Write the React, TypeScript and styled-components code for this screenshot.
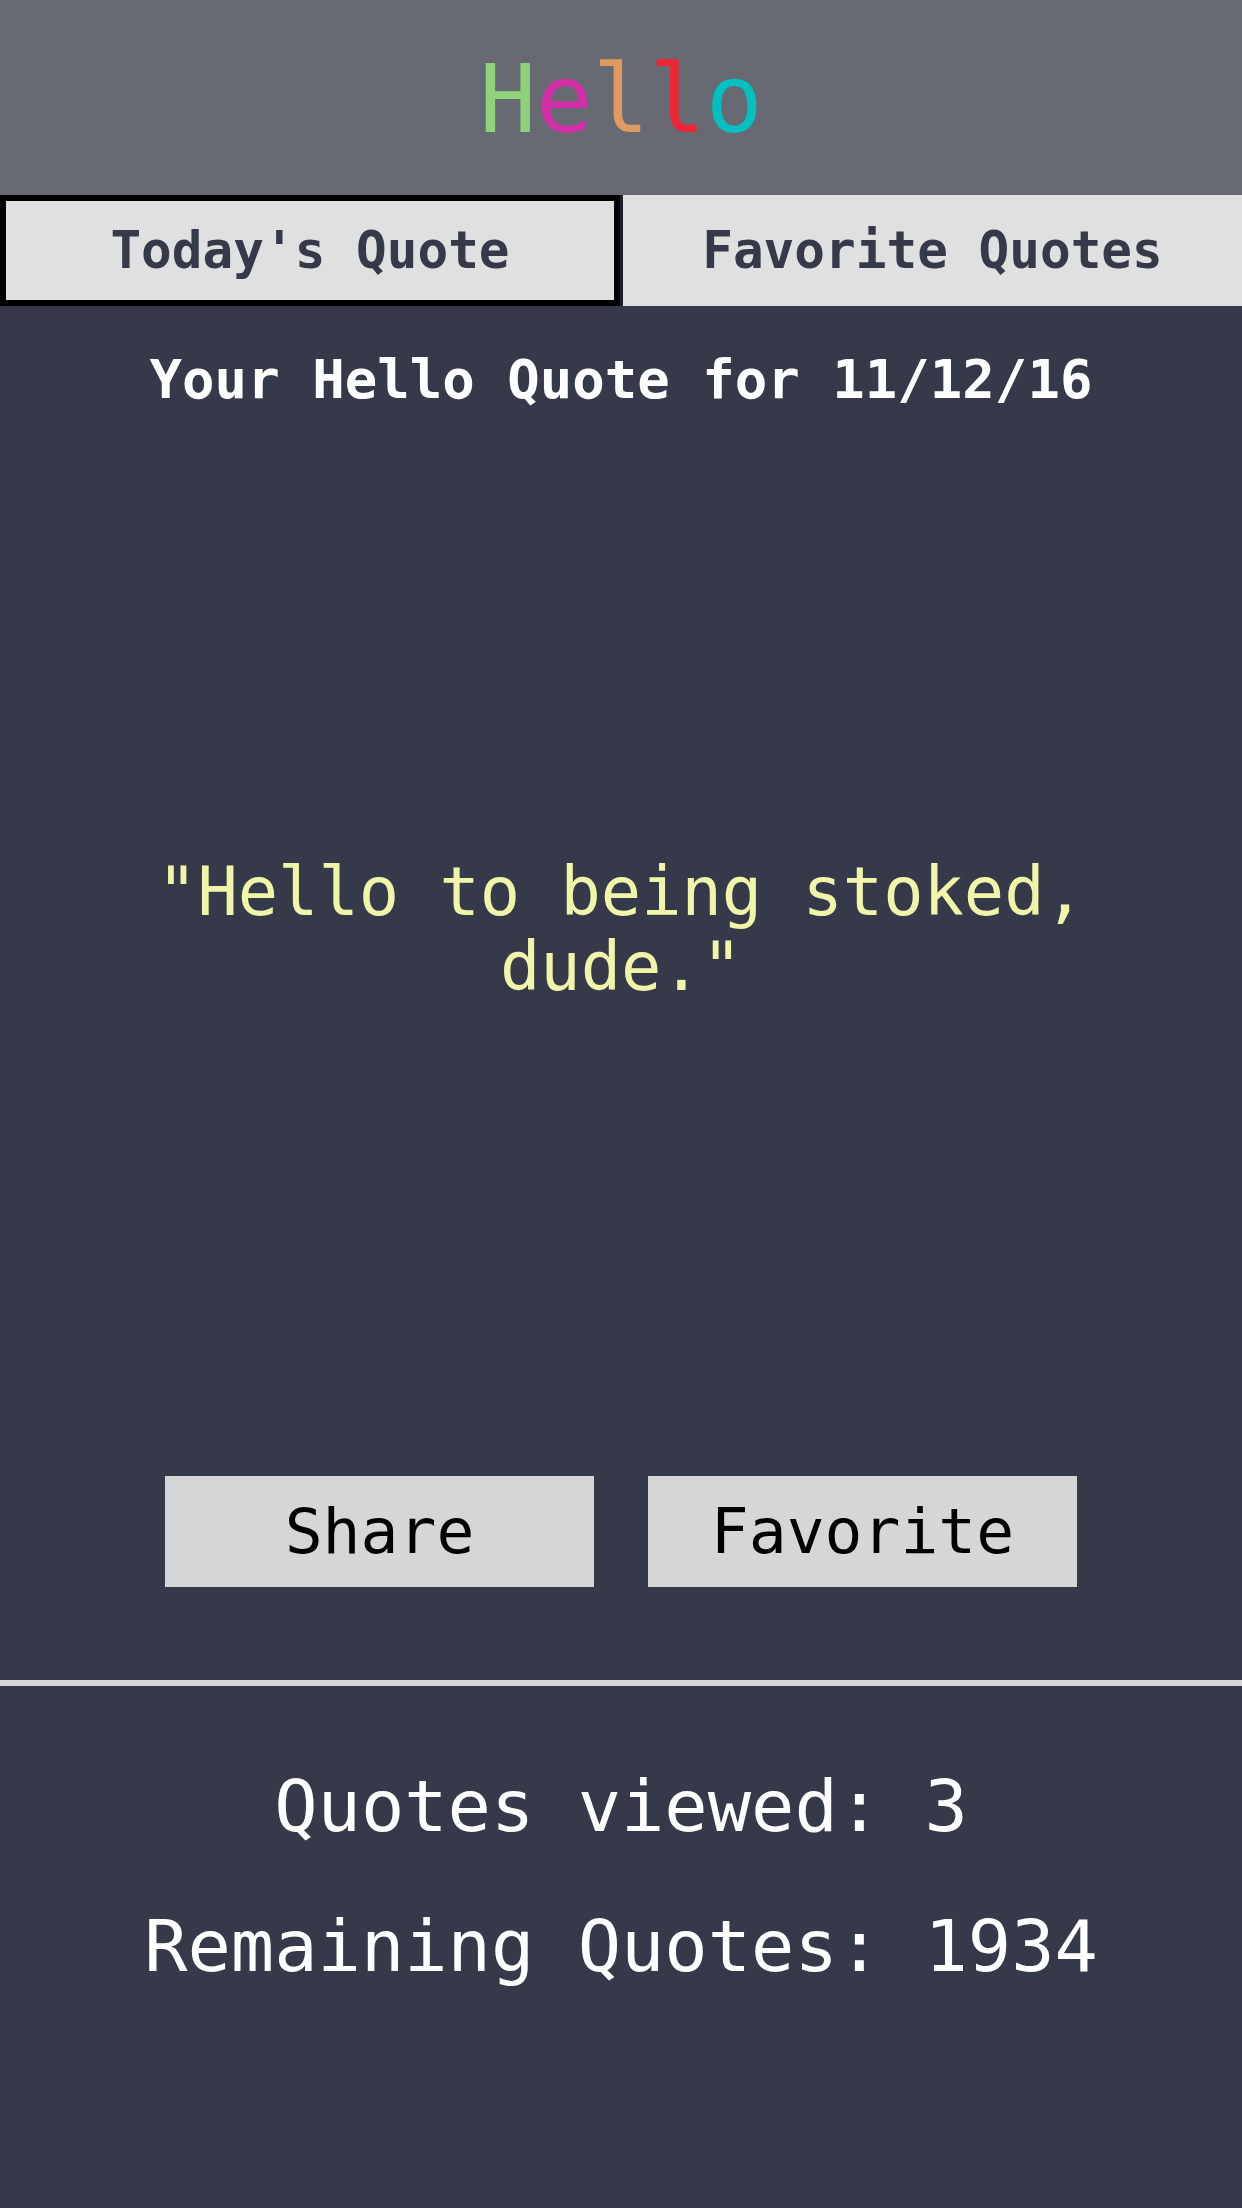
import React from "react";
import styled, { createGlobalStyle } from "styled-components";

const Global = createGlobalStyle`
  html, body {
    margin: 0;
    padding: 0;
    background: #363949;
  }
  body {
    font-family: "DejaVu Sans Mono", "Liberation Mono", monospace;
  }
  * { box-sizing: border-box; }
`;

const Page = styled.div`
  width: 1242px;
  min-height: 2208px;
  background: #363949;
  display: flex;
  flex-direction: column;
`;

const Header = styled.header`
  height: 195px;
  background: #676a73;
  display: flex;
  justify-content: center;
  padding-top: 45px;
`;

const Logo = styled.h1`
  margin: 0;
  font-size: 94px;
  font-weight: normal;
  line-height: normal;
  letter-spacing: 0;
`;

const Letter = styled.span<{ $c: string }>`
  color: ${(p) => p.$c};
`;

const Tabs = styled.nav`
  display: flex;
  gap: 3px;
  height: 111px;
  background: #1f2029;
`;

const Tab = styled.button<{ $active?: boolean }>`
  flex: 0 0 ${(p) => (p.$active ? "620px" : "619px")};
  height: 111px;
  margin: 0;
  padding: 0;
  background: #e0e0e0;
  border: ${(p) => (p.$active ? "6px solid #000" : "none")};
  color: #363949;
  font-family: inherit;
  font-weight: bold;
  font-size: 51px;
  line-height: normal;
  display: flex;
  align-items: center;
  justify-content: center;
`;

const Heading = styled.h2`
  margin: 42px 0 0;
  text-align: center;
  color: #ffffff;
  font-size: 54px;
  font-weight: bold;
  line-height: normal;
`;

const Quote = styled.p`
  margin: 444px auto 0;
  width: 1000px;
  text-align: center;
  color: #f1f5a9;
  font-size: 67px;
  line-height: 75px;
`;

const Actions = styled.div`
  display: flex;
  justify-content: center;
  gap: 54px;
  margin-top: 471px;
`;

const ActionButton = styled.button`
  width: 429px;
  height: 111px;
  margin: 0;
  padding: 0;
  border: none;
  background: #d6d6d6;
  color: #000;
  font-family: inherit;
  font-size: 63px;
  line-height: normal;
  display: flex;
  align-items: center;
  justify-content: center;
`;

const Divider = styled.hr`
  margin: 93px 0 0;
  border: none;
  height: 6px;
  background: #d6d6d6;
`;

const Stats = styled.div`
  display: flex;
  flex-direction: column;
  align-items: center;
  gap: 55px;
  margin-top: 78px;
`;

const Stat = styled.p`
  margin: 0;
  color: #ffffff;
  font-size: 72px;
  line-height: 85px;
`;

const letters: [string, string][] = [
  ["H", "#90d27b"],
  ["e", "#d22fa8"],
  ["l", "#e09a60"],
  ["l", "#ee2535"],
  ["o", "#00c1c0"],
];

export default function App() {
  return (
    <Page>
      <Global />
      <Header>
        <Logo>
          {letters.map(([ch, c], i) => (
            <Letter key={i} $c={c}>
              {ch}
            </Letter>
          ))}
        </Logo>
      </Header>
      <Tabs>
        <Tab $active>Today's Quote</Tab>
        <Tab>Favorite Quotes</Tab>
      </Tabs>
      <Heading>Your Hello Quote for 11/12/16</Heading>
      <Quote>"Hello to being stoked, dude."</Quote>
      <Actions>
        <ActionButton>Share</ActionButton>
        <ActionButton>Favorite</ActionButton>
      </Actions>
      <Divider />
      <Stats>
        <Stat>Quotes viewed: 3</Stat>
        <Stat>Remaining Quotes: 1934</Stat>
      </Stats>
    </Page>
  );
}
